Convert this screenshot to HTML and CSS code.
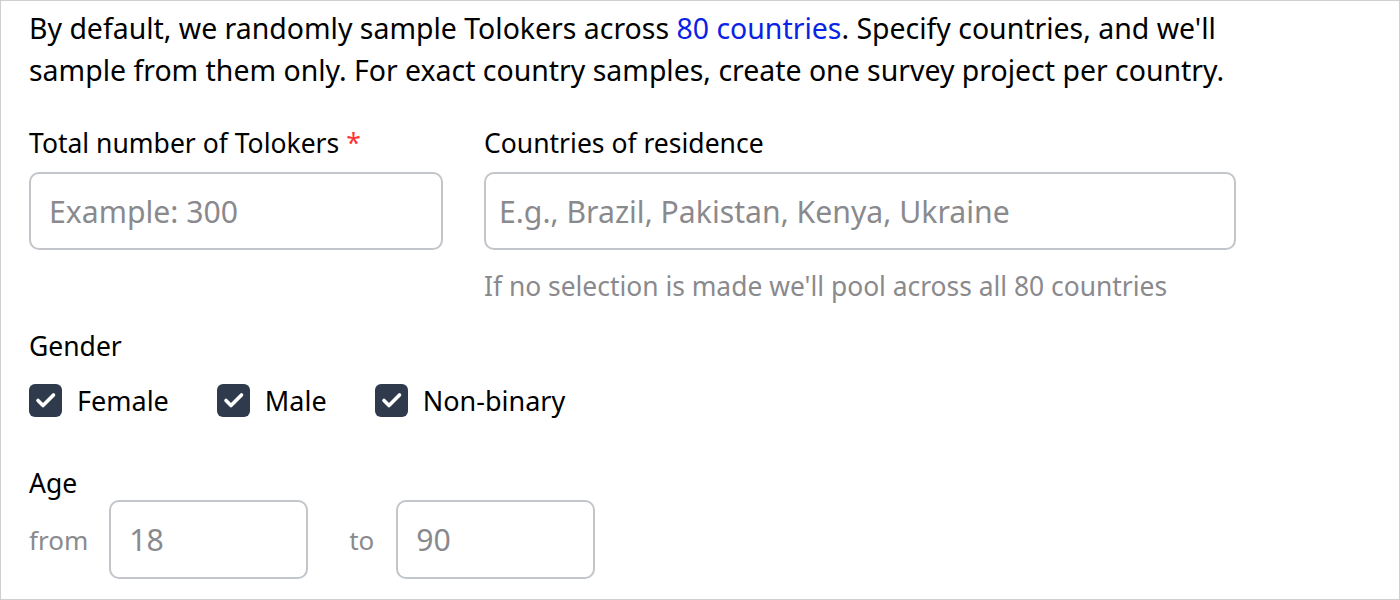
FILE: index.html
```html
<!DOCTYPE html>
<html>
<head>
<meta charset="utf-8">
<link rel="stylesheet" href="styles.css">
</head>
<body>
<div class="frame">
  <p class="intro">By default, we randomly sample Tolokers across <a class="link" href="#">80 countries</a>. Specify countries, and we'll<br>sample from them only. For exact country samples, create one survey project per country.</p>

  <div class="row">
    <div class="field field-total">
      <div class="label">Total number of Tolokers <span class="req">*</span></div>
      <div class="input"><span class="placeholder">Example: 300</span></div>
    </div>
    <div class="field field-countries">
      <div class="label">Countries of residence</div>
      <div class="input"><span class="placeholder">E.g., Brazil, Pakistan, Kenya, Ukraine</span></div>
      <div class="hint">If no selection is made we'll pool across all 80 countries</div>
    </div>
  </div>

  <div class="section gender">
    <div class="label">Gender</div>
    <div class="checks">
      <label class="check"><span class="box"><svg viewBox="0 0 33 33" width="33" height="33"><path d="M9 16.5 L14 21.5 L24.5 11" fill="none" stroke="#fff" stroke-width="3.6" stroke-linecap="round" stroke-linejoin="round"/></svg></span>Female</label>
      <label class="check"><span class="box"><svg viewBox="0 0 33 33" width="33" height="33"><path d="M9 16.5 L14 21.5 L24.5 11" fill="none" stroke="#fff" stroke-width="3.6" stroke-linecap="round" stroke-linejoin="round"/></svg></span>Male</label>
      <label class="check"><span class="box"><svg viewBox="0 0 33 33" width="33" height="33"><path d="M9 16.5 L14 21.5 L24.5 11" fill="none" stroke="#fff" stroke-width="3.6" stroke-linecap="round" stroke-linejoin="round"/></svg></span>Non-binary</label>
    </div>
  </div>

  <div class="section age">
    <div class="label">Age</div>
    <div class="range">
      <span class="range-word">from</span>
      <div class="input small"><span class="value">18</span></div>
      <span class="range-word to">to</span>
      <div class="input small last"><span class="value">90</span></div>
    </div>
  </div>
</div>
</body>
</html>
```

FILE: styles.css
```css
* { box-sizing: border-box; }
html, body { margin: 0; padding: 0; background: #fff; }
body {
  font-family: "Noto Sans", "Open Sans", sans-serif;
  color: #000;
}
.frame {
  width: 1400px;
  height: 600px;
  border: 1px solid #cfcfcf;
  padding: 6px 28px 0 28px;
  overflow: hidden;
}
.intro {
  margin: 0;
  font-size: 28.45px;
  line-height: 42px;
}
.link { color: #0a22e6; text-decoration: none; }
.row {
  display: flex;
  gap: 41px;
  margin-top: 36px;
}
.label {
  font-size: 26.5px;
  line-height: 32px;
}
.req { color: #f33; }
.input {
  border: 2px solid #c2c5ca;
  border-radius: 10px;
  height: 78px;
  display: flex;
  align-items: center;
  padding: 0 18px;
  margin-top: 13px;
  font-size: 30.2px;
}
.field-countries .input { padding-left: 13px; }
.placeholder, .value { color: #8a8a8e; }
.field-total { width: 414px; }
.field-countries { width: 752px; }
.hint {
  color: #8a8a8e;
  font-size: 26.4px;
  margin-top: 20px;
  line-height: 32px;
}
.gender { margin-top: 28px; }
.checks {
  display: flex;
  gap: 48px;
  margin-top: 21px;
}
.check {
  display: flex;
  align-items: center;
  gap: 15px;
  font-size: 27px;
  height: 34px;
}
.box {
  width: 33px;
  height: 33px;
  border-radius: 6px;
  background: #2f3b4d;
  display: block;
}
.box svg { display: block; }
.age { margin-top: 50px; }
.range {
  display: flex;
  align-items: center;
  margin-top: 1px;
}
.range-word { color: #8a8a8e; font-size: 26px; }
.input.small {
  width: 199px;
  height: 79px;
  margin-top: 0;
  margin-left: 21px;
}
.range-word.to { margin-left: 41px; }
.input.small.last { margin-left: 22px; }
```
